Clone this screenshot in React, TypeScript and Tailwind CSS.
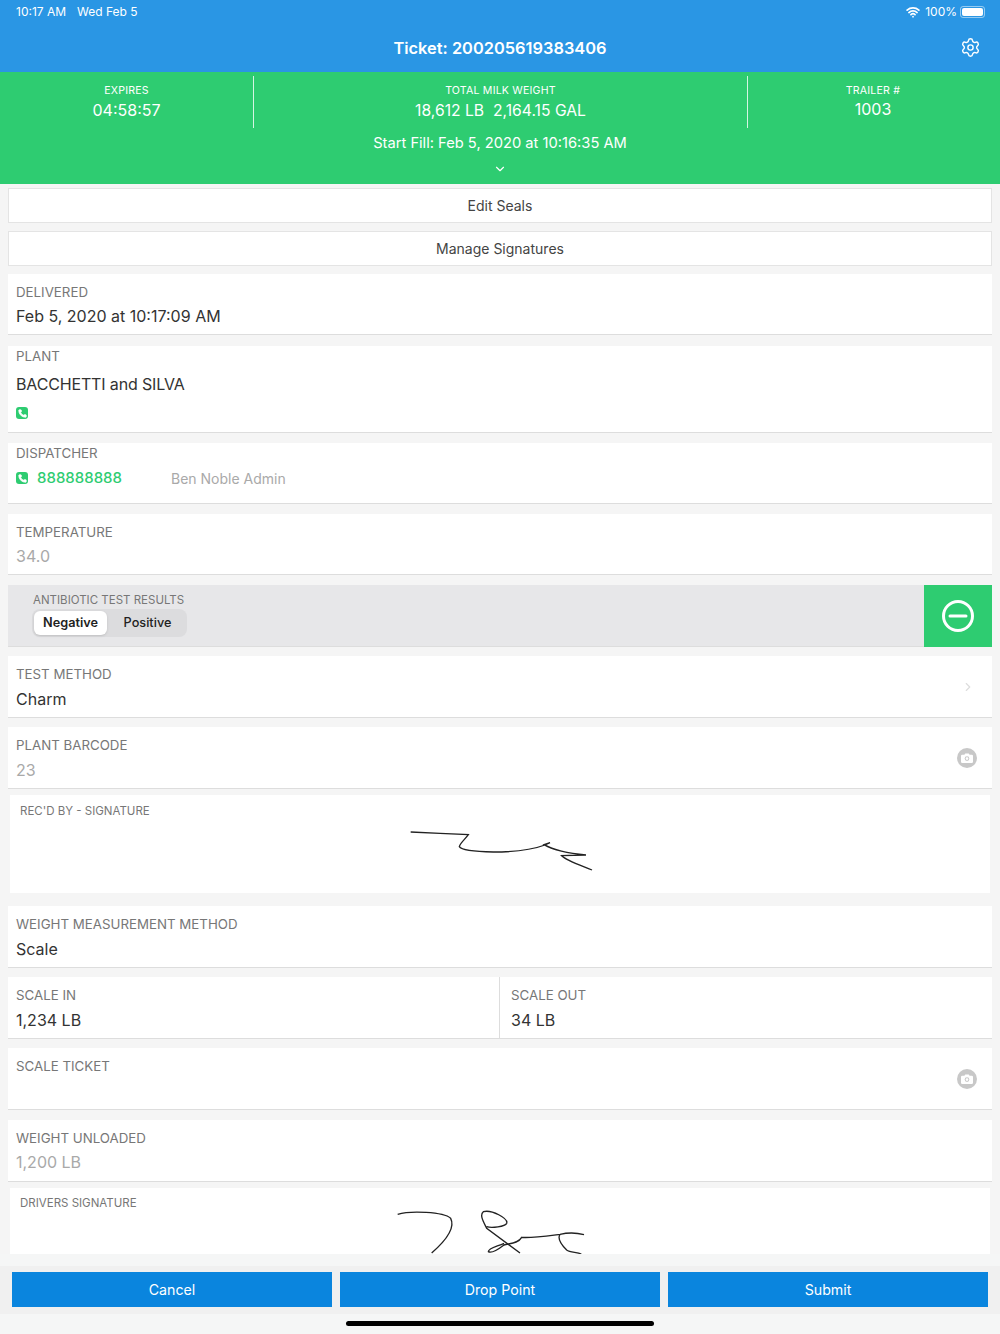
import { ChevronDown, ChevronRight, Phone, Settings, Wifi } from "lucide-react";

function Label({ text }: { text: string }) {
  return <div className="text-[13.3px] leading-4 text-[#777777]">{text}</div>;
}

function Field({ label, value, muted, tight, className }: { label: string; value?: string; muted?: boolean; tight?: boolean; className?: string }) {
  return (
    <div className={`h-[62px] bg-white border-b border-[#dddddd] px-2 pt-[10px] relative ${className ?? ""}`}>
      <Label text={label} />
      {value && (
        <div className={`${tight ? "mt-1" : "mt-[5px]"} text-[16px] leading-6 ${muted ? "text-[#a9a9a9]" : "text-[#333333]"}`}>{value}</div>
      )}
    </div>
  );
}

function PhoneIcon() {
  return (
    <span className="w-3 h-3 rounded-[3px] bg-[#2ecc71] flex items-center justify-center">
      <Phone size={9} className="text-white fill-white" />
    </span>
  );
}

function CameraBadge() {
  return (
    <span className="absolute right-[15px] top-[21px] w-5 h-5 rounded-full bg-[#c8c8c8] flex items-center justify-center">
      <svg viewBox="0 0 12 10" className="w-3 h-[10px]">
        <path d="M1.2 1.8 H3.4 L4.3 0.5 H7.7 L8.6 1.8 H10.8 Q12 1.8 12 3 V8.8 Q12 10 10.8 10 H1.2 Q0 10 0 8.8 V3 Q0 1.8 1.2 1.8 Z" fill="#ffffff" />
        <circle cx="6" cy="5.6" r="2.3" fill="#c8c8c8" />
        <circle cx="6" cy="5.6" r="1.3" fill="#ffffff" />
      </svg>
    </span>
  );
}

function HeaderStat({ label, value, valueClass, className }: { label: string; value: string; valueClass?: string; className?: string }) {
  return (
    <div className={`text-center pt-[8px] ${className ?? ""}`}>
      <div className="text-[10.6px] leading-[14px] tracking-[0.2px]">{label}</div>
      <div className={`text-[16px] leading-[24px] whitespace-pre ${valueClass ?? ""}`}>{value}</div>
    </div>
  );
}

export default function App() {
  return (
    <div className="w-[1000px] h-[1334px] overflow-hidden flex flex-col bg-[#f5f5f5] font-['Inter',sans-serif]">
      {/* Nav bar */}
      <div className="h-[72px] bg-[#2a96e4] text-white relative shrink-0">
        <div className="h-6 px-4 flex items-center justify-between text-[12px]">
          <div className="flex gap-[11px]">
            <span>10:17 AM</span>
            <span>Wed Feb 5</span>
          </div>
          <div className="flex items-center gap-[3px] mr-[-1px]">
            <Wifi size={14} strokeWidth={3} />
            <span className="ml-[2px]">100%</span>
            <span className="w-[25px] h-[12px] rounded-[3px] border border-white/50 p-[1px]">
              <span className="block h-full rounded-[2px] bg-white" />
            </span>
          </div>
        </div>
        <div className="text-center text-[16.4px] leading-6 font-semibold mt-3">Ticket: 200205619383406</div>
        <Settings size={21} strokeWidth={1.6} className="absolute right-[19px] top-[37px]" />
      </div>

      {/* Green summary */}
      <div className="h-[112px] bg-[#2ecc71] text-white shrink-0">
        <div className="grid grid-cols-[253px_1fr_252px] h-[52px] mt-1">
          <HeaderStat label="EXPIRES" value="04:58:57" />
          <div className="border-x border-white/80">
            <HeaderStat label="TOTAL MILK WEIGHT" value="18,612 LB  2,164.15 GAL" valueClass="!text-[15.7px] mt-[1px]" />
          </div>
          <HeaderStat className="pr-[2px]" label="TRAILER #" value="1003" valueClass="-mt-[1px]" />
        </div>
        <div className="text-center text-[14.7px] leading-5 mt-[5px]">Start Fill: Feb 5, 2020 at 10:16:35 AM</div>
        <ChevronDown size={14} className="mx-auto mt-[9px]" />
      </div>

      {/* Form */}
      <div className="flex-1 overflow-hidden px-2">
        <div className="mt-1 h-[35px] bg-white border border-[#e4e4e4] flex items-center justify-center text-[14px] text-[#444444]">Edit Seals</div>
        <div className="mt-2 h-[35px] bg-white border border-[#e4e4e4] flex items-center justify-center text-[14px] text-[#444444]">Manage Signatures</div>

        <Field className="mt-2 !h-[61px]" label="DELIVERED" value="Feb 5, 2020 at 10:17:09 AM" tight />

        <div className="mt-[11px] h-[87px] bg-white border-b border-[#dddddd] px-2 pt-[2px]">
          <Label text="PLANT" />
          <div className="mt-[8px] text-[16px] leading-6 tracking-[-0.15px] text-[#333333]">BACCHETTI and SILVA</div>
          <div className="mt-[11px]"><PhoneIcon /></div>
        </div>

        <div className="mt-[10px] h-[61px] bg-white border-b border-[#dddddd] px-2 pt-[2px]">
          <Label text="DISPATCHER" />
          <div className="mt-[5px] flex items-center h-6">
            <PhoneIcon />
            <span className="ml-[9px] w-[134px] text-[15px] font-medium text-[#2ecc71]">888888888</span>
            <span className="text-[14px] text-[#a9a9a9]">Ben Noble Admin</span>
          </div>
        </div>

        <Field className="mt-[10px] !h-[61px]" label="TEMPERATURE" value="34.0" muted tight />

        <div className="mt-[10px] h-[62px] bg-[#e7e7e9] border-b border-[#dddddd] flex justify-between">
          <div className="pl-[24px] pt-[8px]">
            <div className="pl-px text-[11.5px] leading-[14px] text-[#777777]">ANTIBIOTIC TEST RESULTS</div>
            <div className="mt-[2px] w-[155px] h-7 rounded-lg bg-[#dcdcde] p-[2px] flex items-center text-[12.7px] font-semibold text-[#222222]">
              <span className="w-[73px] h-6 rounded-md bg-white shadow-sm flex items-center justify-center">Negative</span>
              <span className="flex-1 pl-[3px] text-center font-medium">Positive</span>
            </div>
          </div>
          <div className="w-[68px] -mb-px bg-[#2ecc71] flex items-center justify-center">
            <svg viewBox="0 0 32 32" className="w-8 h-8" fill="none" stroke="#ffffff" strokeWidth="3">
              <circle cx="16" cy="16" r="14.5" />
              <line x1="8" y1="16" x2="24" y2="16" strokeLinecap="round" />
            </svg>
          </div>
        </div>

        <Field className="mt-[9px]" label="TEST METHOD" value="Charm" />
        <div className="relative">
          <ChevronRight size={14} className="absolute right-[17px] top-[-38px] text-[#dddddd]" />
        </div>

        <div className="relative mt-[9px]">
          <Field label="PLANT BARCODE" value="23" muted />
          <CameraBadge />
        </div>

        <div className="mt-[6px] mx-[2px] h-[98px] bg-white pl-[10px] pt-[9px] relative">
          <div className="text-[11.5px] leading-[14px] text-[#777777]">REC'D BY - SIGNATURE</div>
          <svg viewBox="0 0 720 270" className="absolute left-[370px] top-[5px] w-[240px] h-[90px]" fill="none" stroke="#222222" strokeWidth="4">
            <path d="M92 96 L180 100 L265 104 C255 118 240 130 238 140 C245 152 290 155 340 156 C400 156 460 148 495 135 L510 128 L492 134 C520 150 560 160 618 165 L545 167 C560 182 600 195 636 210" />
          </svg>
        </div>

        <Field className="mt-[13px]" label="WEIGHT MEASUREMENT METHOD" value="Scale" />

        <div className="mt-[9px] grid grid-cols-2">
          <Field className="border-r" label="SCALE IN" value="1,234 LB" />
          <Field className="!pl-[11px]" label="SCALE OUT" value="34 LB" />
        </div>

        <div className="relative mt-[9px]">
          <Field label="SCALE TICKET" />
          <CameraBadge />
        </div>

        <Field className="mt-[10px]" label="WEIGHT UNLOADED" value="1,200 LB" muted tight />

        <div className="mt-[6px] mx-[2px] h-[66px] overflow-hidden bg-white pl-[10px] pt-[8px] relative">
          <div className="text-[11.5px] leading-[14px] text-[#777777]">DRIVERS SIGNATURE</div>
          <svg viewBox="0 0 720 432" className="absolute left-[370px] top-[2px] w-[240px] h-[144px]" fill="none" stroke="#222222" strokeWidth="4">
            <path d="M53 73 C90 62 190 65 212 85 C225 110 205 145 155 189" />
            <path d="M420 189 L320 115 C310 95 298 75 310 65 C335 58 385 85 380 100 C375 110 335 115 320 110" />
            <path d="M372 160 C350 170 325 175 325 185 C335 192 355 178 372 165 C390 160 415 160 425 142 C450 145 500 138 540 133 C570 126 590 128 612 134" />
            <path d="M540 133 C532 145 545 165 560 180 C570 188 590 186 604 192" />
          </svg>
        </div>
      </div>

      {/* Footer */}
      <div className="h-[80px] shrink-0 bg-[#f5f6f6] relative">
        <div className="mt-[12px] px-3 pt-[6px] pb-[7px] bg-[#f0f0f0] grid grid-cols-3 gap-2 text-white text-[14.2px]">
          <button className="h-[35px] pt-[1px] bg-[#0a85de]">Cancel</button>
          <button className="h-[35px] pt-[1px] bg-[#0a85de]">Drop Point</button>
          <button className="h-[35px] pt-[1px] bg-[#0a85de]">Submit</button>
        </div>
        <div className="absolute left-[346px] bottom-[8px] w-[308px] h-[5px] rounded-full bg-black" />
      </div>
    </div>
  );
}
